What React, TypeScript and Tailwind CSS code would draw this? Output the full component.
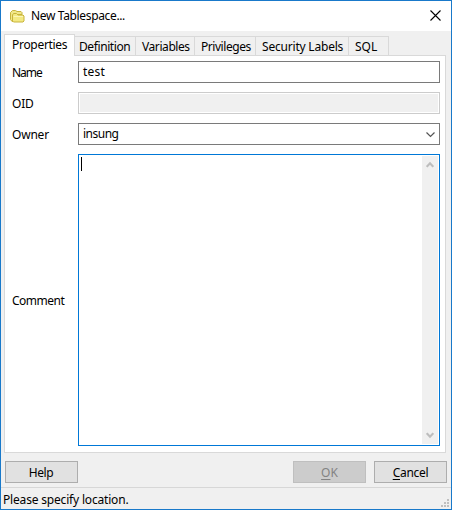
import type { ReactNode } from 'react';

const tabs = [
  { label: 'Definition', style: 'w-[61px] pl-1 tracking-[-0.4px]' },
  { label: 'Variables', style: 'w-[59px] pl-[6px] tracking-[-0.42px]' },
  { label: 'Privileges', style: 'w-[61px] pl-[6px] tracking-[-0.45px]' },
  { label: 'Security Labels', style: 'w-[93px] pl-[6px] tracking-[-0.2px]' },
  { label: 'SQL', style: 'w-[40px] pl-[6px]' },
];

function Field({ label, tracking, children }: { label: string; tracking: string; children: ReactNode }) {
  return (
    <div className="flex h-[22px] items-center">
      <div className={`w-[73px] shrink-0 pl-[7px] pt-px ${tracking}`}>{label}</div>
      {children}
    </div>
  );
}

function FolderIcon() {
  return (
    <svg width="15" height="13" viewBox="0 0 15 13" className="shrink-0">
      <path d="M.5 9.500v-7l2-2h3l1.500 1h4l1 1v2h-8l-1 1v6h-1z" fill="#f0e68a" stroke="#c8b43c" />
      <path d="M2.500 11V5l1-1.500h3L8 5h5l1 1v5l-1 1H3.500z" fill="#f3e983" stroke="#c8b43c" />
      <path d="M3.500 6.500h9.500" stroke="#fbf5b8" />
    </svg>
  );
}

function Chevron({ up = false }: { up?: boolean }) {
  return (
    <svg width="8" height="7" viewBox="0 0 8 7" className={up ? 'rotate-180' : ''}>
      <path d="M.7 1.200L4 4.700l3.300-3.500" fill="none" stroke="#bdbdbd" strokeWidth="2.200" />
    </svg>
  );
}

export default function App() {
  return (
    <div className="flex h-[510px] w-[452px] flex-col border border-[#1979ca] bg-[#f0f0f0] font-['Noto_Sans',sans-serif] text-[12px] leading-4 text-black">
      <header className="flex h-[30px] shrink-0 items-center bg-white pl-[9px] pr-[10px]">
        <FolderIcon />
        <span className="ml-[6px] grow tracking-[-0.35px]">New Tablespace...</span>
        <svg width="11" height="11" viewBox="0 0 11 11" className="mb-px">
          <path d="M.5.5l10 10M10.500.5l-10 10" stroke="#000" strokeWidth="1.100" />
        </svg>
      </header>
      <nav className="flex h-6 shrink-0 items-end pl-[3px]">
        <div className="z-10 -mb-px h-[22px] w-[71px] shrink-0 border border-b-0 border-[#d9d9d9] bg-white pl-[7px] pt-[2px] tracking-[-0.3px]">
          Properties
        </div>
        {tabs.map((t) => (
          <div key={t.label} className={`h-[19px] shrink-0 whitespace-nowrap border-r border-t border-[#d9d9d9] pt-[2px] ${t.style}`}>
            {t.label}
          </div>
        ))}
      </nav>
      <main className="ml-[3px] flex h-[398px] w-[442px] shrink-0 flex-col border border-[#d9d9d9] bg-white pr-[5px] pt-[5px]">
        <div className="flex flex-col gap-[9px]">
          <Field label="Name" tracking="tracking-[-1px]">
            <div className="h-[22px] grow border border-[#7a7a7a] pl-1 pt-[2px] tracking-[0.2px]">test</div>
          </Field>
          <Field label="OID" tracking="tracking-[-0.2px]">
            <div className="h-[22px] grow border border-[#cccccc] p-px">
              <div className="h-full bg-[#f0f0f0]" />
            </div>
          </Field>
          <Field label="Owner" tracking="tracking-[-0.2px]">
            <div className="flex h-[22px] grow justify-between border border-[#7a7a7a] pl-1 pr-1 pt-[2px]">
              <span className="tracking-[-0.5px]">insung</span>
              <svg width="9" height="6" viewBox="0 0 9 6" className="mt-[6px]">
                <path d="M.5.5l4 4 4-4" fill="none" stroke="#555" strokeWidth="1.200" />
              </svg>
            </div>
          </Field>
          <div className="flex h-[292px] items-center">
            <div className="w-[73px] shrink-0 pl-[7px] pt-px tracking-[-0.5px]">Comment</div>
            <div className="flex h-full grow justify-between border border-[#0078d7] p-px">
              <div className="ml-px mt-px h-[14px] w-px bg-black" />
              <div className="flex w-4 flex-col items-center justify-between bg-[#f0f0f0] py-[5px]">
                <Chevron up />
                <Chevron />
              </div>
            </div>
          </div>
        </div>
      </main>
      <footer className="flex h-[34px] shrink-0 pl-1 pr-1 pt-2">
        <button className="h-[22px] w-[73px] border border-[#adadad] bg-[#e1e1e1] pr-px pt-px tracking-[-0.4px]">Help</button>
        <button className="ml-auto h-[22px] w-[73px] border border-[#bfbfbf] bg-[#cccccc] pt-px text-[#838383]">
          <span className="underline underline-offset-2">O</span>K
        </button>
        <button className="ml-2 h-[22px] w-[73px] border border-[#adadad] bg-[#e1e1e1] pt-px tracking-[-0.3px]">
          <span className="underline underline-offset-2">C</span>ancel
        </button>
      </footer>
      <div className="flex grow justify-between border-t border-[#d7d7d7] pl-[2px] pt-1">
        <span className="tracking-[-0.18px]">Please specify location.</span>
        <svg width="10" height="8" viewBox="0 0 10 8" className="mt-[7px]" fill="#bfbfbf">
          <path d="M6 0h2v2H6zM3 3h2v2H3zM6 3h2v2H6zM0 6h2v2H0zM3 6h2v2H3zM6 6h2v2H6z" />
        </svg>
      </div>
    </div>
  );
}
